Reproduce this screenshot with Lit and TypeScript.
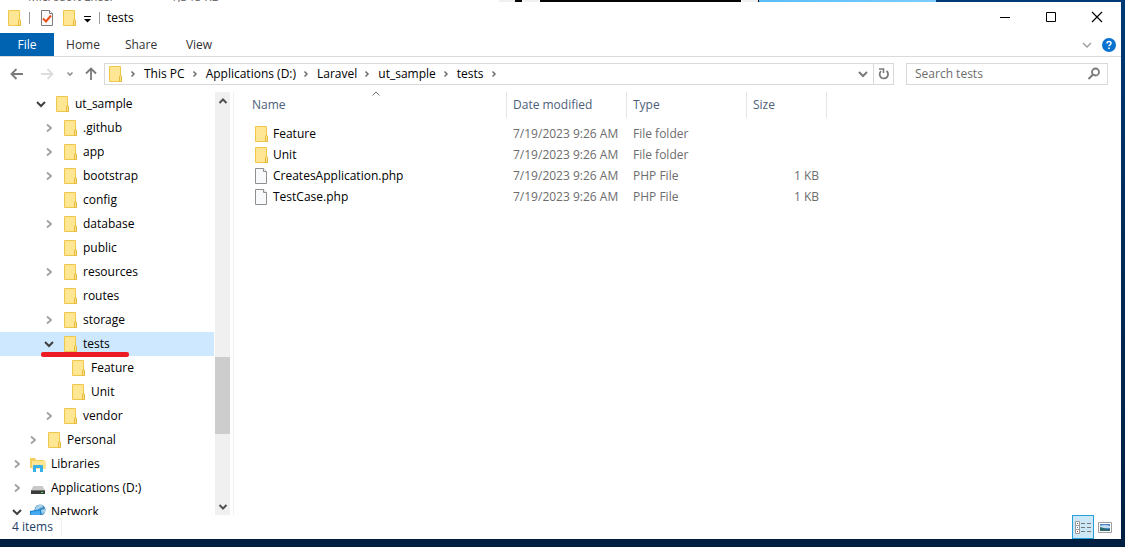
import { LitElement, html, css, svg, nothing } from "lit";
import { customElement, property } from "lit/decorators.js";
import { classMap } from "lit/directives/class-map.js";

type Branch = "open" | "closed" | "none";

interface TreeItem {
  label: string;
  level: number;
  branch: Branch;
  icon: string;
  selected?: boolean;
}

interface FileRow {
  name: string;
  icon: string;
  modified: string;
  type: string;
  size: string;
}

const TREE: TreeItem[] = [
  { label: "ut_sample", level: 3, branch: "open", icon: "folder" },
  { label: ".github", level: 4, branch: "closed", icon: "folder" },
  { label: "app", level: 4, branch: "closed", icon: "folder" },
  { label: "bootstrap", level: 4, branch: "closed", icon: "folder" },
  { label: "config", level: 4, branch: "none", icon: "folder" },
  { label: "database", level: 4, branch: "closed", icon: "folder" },
  { label: "public", level: 4, branch: "none", icon: "folder" },
  { label: "resources", level: 4, branch: "closed", icon: "folder" },
  { label: "routes", level: 4, branch: "none", icon: "folder" },
  { label: "storage", level: 4, branch: "closed", icon: "folder" },
  { label: "tests", level: 4, branch: "open", icon: "folder", selected: true },
  { label: "Feature", level: 5, branch: "none", icon: "folder" },
  { label: "Unit", level: 5, branch: "none", icon: "folder" },
  { label: "vendor", level: 4, branch: "closed", icon: "folder" },
  { label: "Personal", level: 2, branch: "closed", icon: "folder" },
  { label: "Libraries", level: 0, branch: "closed", icon: "libraries" },
  { label: "Applications (D:)", level: 0, branch: "closed", icon: "drive" },
  { label: "Network", level: 0, branch: "open", icon: "network" },
];

const FILES: FileRow[] = [
  { name: "Feature", icon: "folder", modified: "7/19/2023 9:26 AM", type: "File folder", size: "" },
  { name: "Unit", icon: "folder", modified: "7/19/2023 9:26 AM", type: "File folder", size: "" },
  { name: "CreatesApplication.php", icon: "file", modified: "7/19/2023 9:26 AM", type: "PHP File", size: "1 KB" },
  { name: "TestCase.php", icon: "file", modified: "7/19/2023 9:26 AM", type: "PHP File", size: "1 KB" },
];

const CRUMBS = ["This PC", "Applications (D:)", "Laravel", "ut_sample", "tests"];

const GLYPHS: Record<string, unknown> = {
  folder: svg`
    <path d="M2.5 .5h11v10h1v5h-12z" fill="#ffe694" stroke="#efc84a"/>
    <path d="M12.5 15.5v-5q0-1 1-1t1 1v5z" fill="#ffe08a" stroke="#e6bb3c"/>`,
  file: svg`
    <path d="M2.5 .5h8l3 3v12h-11z" fill="#f7f9fa" stroke="#8f8f8f"/>
    <path d="M10.5 .5v3h3" fill="#fff" stroke="#8f8f8f"/>`,
  checked: svg`
    <path d="M2.5 .5h8l3 3v12h-11z" fill="#fafafa" stroke="#7d7d7d"/>
    <path d="M10.5 .5v3h3" fill="#fff" stroke="#7d7d7d"/>
    <path d="M4 8.500l3 3 5-6" fill="none" stroke="#e8501c" stroke-width="2"/>`,
  libraries: svg`
    <path d="M0 2h5l1 2h8v8H0z" fill="#f7cf5f"/>
    <path d="M2 5h14v8H2z" fill="#ffe694"/>
    <path d="M3 16V10q0-1 1-1h8q1 0 1 1v6h-3v-4H6v4z" fill="#38b0ea"/>`,
  drive: svg`
    <path d="M3.500 6h9L15 10H1z" fill="#c9c9c9"/>
    <path d="M1 10h14v4H1z" fill="#3b3b3b"/>
    <path d="M1 10h14v1H1z" fill="#707070"/>
    <path d="M11 12h2v1h-2z" fill="#4be04b"/>`,
  network: svg`
    <circle cx="10" cy="6" r="5.500" fill="#4b8fc0"/>
    <path d="M6 3q3-3 6-2l1 2-3 1-2 2-3 0zM11 6l4-1v3l-3 2z" fill="#a8d2ea"/>
    <path d="M0 7l11-2v10H0z" fill="#1c86d1"/>
    <path d="M1 8l9-1.500v7.500H1z" fill="#45aaf0"/>`,
  closed: svg`<path d="M6 4.500l4 3.500-4 3.500" fill="none" stroke="#a0a0a0" stroke-width="1.800"/>`,
  open: svg`<path d="M4 6l4 4 4-4" fill="none" stroke="#404040" stroke-width="2"/>`,
  none: nothing,
  crumb: svg`<path d="M6.500 5.500l2.500 2.500-2.500 2.500" fill="none" stroke="#6e6e6e" stroke-width="1.500"/>`,
  back: svg`<path d="M14 8H3M7.500 3L2.500 8l5 5" fill="none" stroke="#7a7a7a" stroke-width="1.800"/>`,
  forward: svg`<path d="M2 8h11M8.500 3l5 5-5 5" fill="none" stroke="#dcdcdc" stroke-width="1.800"/>`,
  up: svg`<path d="M8 14V3M3 7.500l5-5 5 5" fill="none" stroke="#7a7a7a" stroke-width="1.800"/>`,
  recent: svg`<path d="M5.500 6.500l2.500 2.500 2.500-2.500" fill="none" stroke="#909090" stroke-width="1.600"/>`,
  dropdown: svg`<path d="M4 6l4 4 4-4" fill="none" stroke="#7a7a7a" stroke-width="2"/>`,
  expand: svg`<path d="M4 6l4 4 4-4" fill="none" stroke="#9a9a9a" stroke-width="1.300"/>`,
  refresh: svg`
    <path d="M10.500 5A4.200 4.200 0 1 1 5 5.200" fill="none" stroke="#7a7a7a" stroke-width="1.800"/>
    <path d="M3 3h4.500v4" fill="none" stroke="#7a7a7a" stroke-width="1.600"/>`,
  search: svg`
    <circle cx="9.500" cy="6" r="3.500" fill="none" stroke="#7a7a7a" stroke-width="1.800"/>
    <path d="M7 8.500L2.500 13" stroke="#7a7a7a" stroke-width="2"/>`,
  minimize: svg`<path d="M3 8.500h10" stroke="#000"/>`,
  maximize: svg`<path d="M3.500 3.500h9v9h-9z" fill="none" stroke="#000"/>`,
  close: svg`<path d="M3 3l10 10M13 3L3 13" stroke="#000" stroke-width="1.200"/>`,
  customize: svg`<path d="M5 6.500h7" stroke="#000"/><path d="M5 9h7l-3.500 3.500z" fill="#000"/>`,
  help: svg`
    <circle cx="8" cy="8" r="7" fill="#0a72cf"/>
    <path d="M6 6.500q0-2 2-2t2 1.800q0 1-1 1.500t-1 1.500" fill="none" stroke="#fff" stroke-width="1.500"/>
    <path d="M7.200 10.500h1.600v1.500H7.200z" fill="#fff"/>`,
  scrollUp: svg`<path d="M4.500 10L8 6.500l3.500 3.500" fill="none" stroke="#505050" stroke-width="2"/>`,
  scrollDown: svg`<path d="M4.500 6L8 9.500 11.500 6" fill="none" stroke="#505050" stroke-width="2"/>`,
  sorted: svg`<path d="M4.500 9.500L8 6l3.500 3.500" fill="none" stroke="#6f6f6f"/>`,
  details: svg`
    <path d="M.5 2.500h4v4h-4zM.5 6.500h4v4h-4zM.5 10.500h4v4h-4z" fill="#fff" stroke="#9a9a9a"/>
    <path d="M2 4h1v1H2z" fill="#555"/><path d="M2 8h1v1H2z" fill="#2a8ad4"/><path d="M2 12h1v1H2z" fill="#d02020"/>
    <path d="M6 4.500h4M12 4.500h4M6 8.500h4M12 8.500h4M6 12.500h4M12 12.500h4" stroke="#777"/>`,
  thumbs: svg`
    <path d="M1.500 3.500h13v10h-13z" fill="#fff" stroke="#a0a0a0"/>
    <path d="M3 5h10v7H3z" fill="#4c86c8"/>
    <path d="M3 7q4-2 10 0v2H3z" fill="#c4dcf2"/>
    <path d="M3 8q4 1 6 2h4v2H3z" fill="#2e6a6a"/>`,
};

@customElement("ui-glyph")
export class UiGlyph extends LitElement {
  @property() name = "folder";

  static styles = css`
    :host { display: inline-flex; flex: none; width: 16px; height: 16px; }
    svg { display: block; width: 16px; height: 16px; }
  `;

  render() {
    return html`<svg viewBox="0 0 16 16" aria-hidden="true">${GLYPHS[this.name]}</svg>`;
  }
}

@customElement("folder-tree")
export class FolderTree extends LitElement {
  static styles = css`
    :host { display: grid; grid-template-columns: minmax(0, 1fr) 16px; min-height: 0; overflow: hidden; }
    .tree { list-style: none; margin: 0; padding: 0; overflow: hidden; min-height: 0; }
    .row { position: relative; height: 24px; margin-right: 1px; }
    .selected { background: #cde8ff; }
    .item { display: flex; align-items: center; width: 100%; height: 24px; border: 0; background: none;
      font: inherit; color: #000; text-align: left; padding: 0; }
    .twig { margin-right: 5px; }
    .label { padding-left: 5px; white-space: nowrap; }
    .mark { position: absolute; left: 41px; top: 20px; width: 88px; height: 5px; border-radius: 2px;
      background: #ed1c24; z-index: 1; }
    .bar { display: flex; flex-direction: column; background: #f0f0f0; width: 15px; }
    .step { display: flex; align-items: center; justify-content: center; height: 17px; width: 15px; flex: none;
      border: 0; padding: 0; background: none; }
    .before { flex: 248; }
    .thumb { flex: 77; background: #cdcdcd; }
    .after { flex: 64; }
  `;

  render() {
    return html`
      <ul class="tree">
        ${TREE.map(
          (t) => html`<li class=${classMap({ row: true, selected: !!t.selected })}>
            <button class="item" style="padding-left:${9 + t.level * 8}px">
              <ui-glyph class="twig" name=${t.branch}></ui-glyph>
              <ui-glyph name=${t.icon}></ui-glyph>
              <span class="label">${t.label}</span>
            </button>
            ${t.selected ? html`<span class="mark"></span>` : nothing}
          </li>`
        )}
      </ul>
      <div class="bar">
        <button class="step" aria-label="Scroll up"><ui-glyph name="scrollUp"></ui-glyph></button>
        <div class="before"></div>
        <div class="thumb"></div>
        <div class="after"></div>
        <button class="step" aria-label="Scroll down"><ui-glyph name="scrollDown"></ui-glyph></button>
      </div>
    `;
  }
}

@customElement("file-list")
export class FileList extends LitElement {
  static styles = css`
    :host { display: block; min-width: 0; overflow: hidden; border-left: 1px solid #f0f0f0; padding-left: 12px; }
    table { border-collapse: separate; border-spacing: 0; table-layout: fixed; width: 100%; }
    .c-name { width: 261px; }
    .c-mid { width: 120px; }
    .c-size { width: 80px; }
    th { position: relative; height: 26px; padding: 0 6px; font-weight: 400; text-align: left; color: #4c607a;
      border-right: 1px solid #e5e5e5; box-sizing: border-box; }
    th:last-child { border-right: 0; }
    .sort { font: inherit; color: inherit; background: none; border: 0; padding: 0; }
    .caret { position: absolute; left: 50%; top: -6px; margin-left: -8px; }
    td { height: 21px; padding: 0 6px; color: #6d6d6d; white-space: nowrap; }
    .gap td { height: 5px; padding: 0; }
    .name { color: #000; }
    .entry { display: flex; align-items: center; gap: 4px; padding-left: 1px; }
    .size { text-align: right; padding-right: 8px; }
  `;

  render() {
    return html`<table>
      <colgroup>
        <col class="c-name" /><col class="c-mid" /><col class="c-mid" /><col class="c-size" /><col />
      </colgroup>
      <thead>
        <tr>
          <th><button class="sort">Name</button><ui-glyph class="caret" name="sorted"></ui-glyph></th>
          <th><button class="sort">Date modified</button></th>
          <th><button class="sort">Type</button></th>
          <th><button class="sort">Size</button></th>
          <th></th>
        </tr>
      </thead>
      <tbody>
        <tr class="gap"><td colspan="5"></td></tr>
        ${FILES.map(
          (f) => html`<tr>
            <td class="name"><div class="entry"><ui-glyph name=${f.icon}></ui-glyph>${f.name}</div></td>
            <td>${f.modified}</td>
            <td>${f.type}</td>
            <td class="size">${f.size}</td>
            <td></td>
          </tr>`
        )}
      </tbody>
    </table>`;
  }
}

@customElement("app-root")
export class AppRoot extends LitElement {
  static styles = css`
    :host { display: grid; grid-template-rows: 2px minmax(0, 1fr); height: 100vh; box-sizing: border-box;
      padding: 0 4px 8px 0; background: linear-gradient(180deg, #003a75, #002a57 45%, #001f40);
      font: 12px/16px "Open Sans", "Noto Sans", sans-serif; color: #000; overflow: hidden; }
    button { font: inherit; color: inherit; border: 0; background: none; padding: 0; }

    .behind { display: grid; grid-template-columns: 499px 16px 7px 1px 16px 1px 201px 1px 16px 1px 177px;
      grid-template-rows: 2px; overflow: hidden; }
    .back-list { display: flex; align-items: flex-end; background: #fff; color: #6d6d6d; padding-left: 28px;
      gap: 58px; line-height: 10px; overflow: hidden; }
    .chrome { background: #f0f0f0; }
    .black { background: #050505; }
    .paper { background: #fff; }
    .sky { background: linear-gradient(90deg, #58bdfb, #7ccdfd); }

    .window { display: grid; grid-template-rows: 31px 24px 35px minmax(0, 1fr) 24px; background: #fff;
      min-height: 0; }
    .title { display: flex; align-items: center; padding-left: 6px; }
    .rule { width: 1px; height: 12px; background: #9a9a9a; }
    .quick { display: flex; align-items: center; gap: 7px; flex: 1; }
    .tasks { display: flex; align-items: center; gap: 6px; padding: 0 0 0 2px; }
    .quick button { display: flex; }
    .menu { display: flex; align-items: center; gap: 4px; margin-left: -5px; }
    .caption { font-weight: 400; font-size: 12px; line-height: 16px; margin: 0; }
    .control { display: flex; align-items: center; justify-content: center; width: 46px; height: 30px; }
    .controls { display: flex; align-self: flex-start; padding-right: 1px; }

    .tabs { display: flex; align-items: stretch; border-bottom: 1px solid #dadbdc; }
    .tab { width: 58px; color: #333; }
    .file { width: 54px; background: #0063b1; color: #fff; }
    .tools { display: flex; align-items: center; gap: 6px; margin-left: auto; padding-right: 4px; }
    .tools button { display: flex; }

    .address { display: flex; align-items: flex-start; padding: 6px 13px 0 9px; }
    .steps { display: flex; align-items: center; height: 22px; width: 95px; }
    .steps button { display: flex; }
    .wide { margin-right: 14px; }
    .near { margin-right: 7px; }
    .tight { margin-right: 5px; }
    .path { display: flex; align-items: center; flex: 1; height: 20px; border: 1px solid #d9d9d9; padding-left: 2px;
      min-width: 0; }
    .crumbs { display: flex; align-items: center; flex: 1; }
    .sep { margin: 0 3px 0 2px; }
    .end { display: flex; align-items: center; justify-content: center; width: 20px; height: 20px; }
    .reload { border-left: 1px solid #d9d9d9; }
    .search { display: flex; align-items: center; width: 200px; height: 20px; margin-left: 12px;
      border: 1px solid #d9d9d9; }
    .query { flex: 1; min-width: 0; border: 0; outline: 0; padding: 0 0 0 8px; font: inherit; background: none; }
    .query::placeholder { color: #6d6d6d; opacity: 1; }
    .find { display: flex; margin-right: 5px; }

    .body { display: grid; grid-template-columns: 233px minmax(0, 1fr); min-height: 0; }
    .side { padding-right: 2px; }
    .status { display: flex; align-items: center; color: #1f3f66; padding: 0 8px 0 12px; }
    .count { padding-right: 8px; border-right: 1px solid #f0f0f0; }
    .views { display: flex; align-items: center; margin-left: auto; gap: 3px; }
    .view { display: flex; align-items: center; justify-content: center; box-sizing: border-box; width: 22px;
      height: 24px; }
    .current { border: 1px solid #26a0da; background: #cce8f6; }
    .small { width: 16px; }
  `;

  render() {
    return html`
      <div class="behind">
        <div class="back-list"><span>Microsoft Excel</span><span>1,348 KB</span></div>
        <div class="chrome"></div><div class="black"></div><div class="paper"></div>
        <div class="chrome"></div><div class="paper"></div><div class="black"></div>
        <div class="paper"></div><div class="chrome"></div><div class="black"></div><div class="sky"></div>
      </div>
      <div class="window">
        <header class="title">
          <div class="quick">
            <ui-glyph name="folder"></ui-glyph>
            <span class="rule"></span>
            <div class="tasks">
              <button aria-label="Properties"><ui-glyph name="checked"></ui-glyph></button>
              <button aria-label="New folder"><ui-glyph name="folder"></ui-glyph></button>
            </div>
            <div class="menu">
              <button aria-label="Customize toolbar"><ui-glyph name="customize"></ui-glyph></button>
              <span class="rule"></span>
            </div>
            <h1 class="caption">tests</h1>
          </div>
          <div class="controls">
            <button class="control" aria-label="Minimize"><ui-glyph name="minimize"></ui-glyph></button>
            <button class="control" aria-label="Maximize"><ui-glyph name="maximize"></ui-glyph></button>
            <button class="control" aria-label="Close"><ui-glyph name="close"></ui-glyph></button>
          </div>
        </header>
        <nav class="tabs">
          <button class="tab file">File</button>
          <button class="tab">Home</button>
          <button class="tab">Share</button>
          <button class="tab">View</button>
          <div class="tools">
            <button aria-label="Expand the ribbon"><ui-glyph name="expand"></ui-glyph></button>
            <button aria-label="Help"><ui-glyph name="help"></ui-glyph></button>
          </div>
        </nav>
        <div class="address">
          <div class="steps">
            <button class="wide" aria-label="Back"><ui-glyph name="back"></ui-glyph></button>
            <button class="near" aria-label="Forward"><ui-glyph name="forward"></ui-glyph></button>
            <button class="tight" aria-label="Recent locations"><ui-glyph name="recent"></ui-glyph></button>
            <button aria-label="Up"><ui-glyph name="up"></ui-glyph></button>
          </div>
          <div class="path">
            <ui-glyph name="folder"></ui-glyph>
            <div class="crumbs">
              <ui-glyph class="sep" name="crumb"></ui-glyph>
              ${CRUMBS.map((c) => html`<button>${c}</button><ui-glyph class="sep" name="crumb"></ui-glyph>`)}
            </div>
            <button class="end" aria-label="Previous locations"><ui-glyph name="dropdown"></ui-glyph></button>
            <button class="end reload" aria-label="Refresh"><ui-glyph name="refresh"></ui-glyph></button>
          </div>
          <div class="search">
            <input class="query" type="text" placeholder="Search tests" aria-label="Search tests" />
            <button class="find" aria-label="Search"><ui-glyph name="search"></ui-glyph></button>
          </div>
        </div>
        <div class="body">
          <folder-tree class="side"></folder-tree>
          <file-list></file-list>
        </div>
        <footer class="status">
          <span class="count">4 items</span>
          <div class="views">
            <button class="view current" aria-label="Details"><ui-glyph name="details"></ui-glyph></button>
            <button class="view small" aria-label="Large thumbnails"><ui-glyph name="thumbs"></ui-glyph></button>
          </div>
        </footer>
      </div>
    `;
  }
}
